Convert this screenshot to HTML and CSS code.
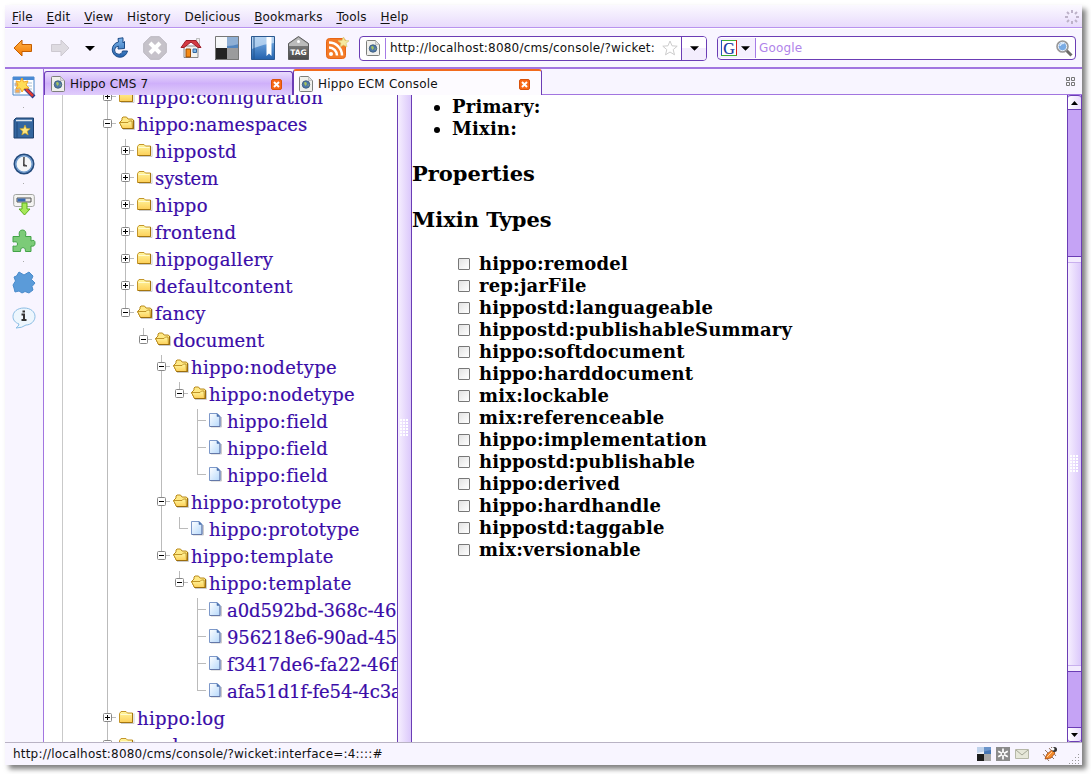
FILE: index.html
```html
<!DOCTYPE html>
<html lang="en">
<head>
<meta charset="utf-8">
<title>Hippo ECM Console</title>
<link rel="stylesheet" href="styles.css">
</head>
<body>
<svg class="defs" width="0" height="0">
  <defs>
    <linearGradient id="gold" x1="0" y1="0" x2="0" y2="1"><stop offset="0" stop-color="#fff7a0"/><stop offset="1" stop-color="#fdcf58"/></linearGradient>
    <linearGradient id="sheet" x1="0" y1="0" x2="1" y2="1"><stop offset="0" stop-color="#fff"/><stop offset="1" stop-color="#b5d8fb"/></linearGradient>
    <linearGradient id="orange" x1="0" y1="0" x2="0" y2="1"><stop offset="0" stop-color="#ffb347"/><stop offset="1" stop-color="#f57900"/></linearGradient>
    <linearGradient id="blue" x1="0" y1="0" x2="0" y2="1"><stop offset="0" stop-color="#7db4ea"/><stop offset="1" stop-color="#2361ad"/></linearGradient>
    <linearGradient id="grey" x1="0" y1="0" x2="0" y2="1"><stop offset="0" stop-color="#999"/><stop offset="1" stop-color="#484848"/></linearGradient>
    <symbol id="folder" viewBox="0 0 16 14"><path d="M2 13.500h13v-10" fill="none" stroke="#ccc"/><path d="M.5 3.500l1.500-2h5l1.500 1.500h5v9.500H.5z" fill="url(#gold)" stroke="#c3952a"/><path d="M1.500 4.500h11" stroke="#fffbd0"/><path d="M13.500 3v9.500H1" fill="none" stroke="#a5760f"/></symbol>
    <symbol id="open" viewBox="0 0 16 14"><path d="M4 13.500h11.500v-9" fill="none" stroke="#ccc"/><path d="M3.500 12.500L.5 6.500 3 4V2l1-1h3.500l1.500 2h4l1.500 1v8.500z" fill="#ffe985" stroke="#b98a1c"/><path d="M.5 6.500h8.500l1.500-1.500h2.500l.5 7.500h-10z" fill="url(#gold)" stroke="#b98a1c" stroke-width=".9"/><path d="M14.500 4v8.500H3.500" fill="none" stroke="#9b6d0d"/></symbol>
    <symbol id="doc" viewBox="0 0 13 15"><path d="M2 14h10.500V4" fill="none" stroke="#ccc"/><path d="M.5.5h7.500l3 3v10H.5z" fill="url(#sheet)" stroke="#7d98c9"/><path d="M8 .5v3h3z" fill="#466eb0" stroke="#5478b4" stroke-width=".6"/><path d="M11 4v9.500H1" fill="none" stroke="#6478a8"/></symbol>
    <symbol id="plus" viewBox="0 0 9 9"><rect x=".5" y=".5" width="8" height="8" rx="1" fill="#fff" stroke="#888"/><path d="M2 4.500h5M4.500 2v5" stroke="#000"/></symbol>
    <symbol id="minus" viewBox="0 0 9 9"><rect x=".5" y=".5" width="8" height="8" rx="1" fill="#fff" stroke="#888"/><path d="M2 4.500h5" stroke="#000"/></symbol>
    <symbol id="page" viewBox="0 0 14 16"><path d="M.5 1.500q0-1 1-1h8l4 4v10q0 1-1 1h-11q-1 0-1-1z" fill="#f0f0ec" stroke="#7d7f7b"/><path d="M9.500.5v4h4z" fill="#ddd" stroke="#aaa" stroke-width=".6"/><circle cx="7" cy="8.500" r="3.800" fill="#4f78a8" stroke="#31506f" stroke-width=".7"/><path d="M5 6.500l2-.5 1 2-1.500 2-1-1.500zM8.500 9.500l1-1.500v2z" fill="#a9c35a"/></symbol>
    <symbol id="close" viewBox="0 0 11 11"><rect x=".5" y=".5" width="10" height="10" rx="1.500" fill="#f86816" stroke="#d8520c"/><path d="M3 3l5 5M8 3l-5 5" stroke="#fff" stroke-width="2"/></symbol>
  </defs>
</svg>

<div class="window">
  <nav class="menu">
    <span><u>F</u>ile</span><span><u>E</u>dit</span><span><u>V</u>iew</span><span>Hi<u>s</u>tory</span><span>De<u>l</u>icious</span><span><u>B</u>ookmarks</span><span><u>T</u>ools</span><span><u>H</u>elp</span>
    <svg class="throbber" width="14" height="14" viewBox="0 0 14 14"><path d="M7 0v3M7 11v3M0 7h3M11 7h3M2 2l2 2M10 10l2 2M2 12l2-2M10 4l2-2" fill="none" stroke="#bdb2c9" stroke-width="2"/></svg>
  </nav>

  <header class="toolbar">
    <svg class="tool back" width="20" height="18" viewBox="0 0 20 18"><path d="M1 9l8-8v4.500h9.500v7H9V17z" fill="url(#orange)" stroke="#c45d00"/></svg>
    <svg class="tool fwd" width="20" height="18" viewBox="0 0 20 18"><path d="M19 9l-8-8v4.500H1.500v7H11V17z" fill="#dedbe1" stroke="#cdc9d1"/></svg>
    <svg class="tool drop" width="10" height="5" viewBox="0 0 10 5"><path d="M0 0h10L5 5z"/></svg>
    <svg class="tool reload" width="20" height="22" viewBox="0 0 20 22"><path d="M9.500 5A7.700 7.700 0 1 0 18.500 14h-5A4 4 0 1 1 9.500 9.200L9 12l6.500-.5V4.500L14 6V.8L9 1.500z" fill="url(#blue)" stroke="#1d4b87" stroke-linejoin="round"/></svg>
    <svg class="tool stop" width="24" height="24" viewBox="0 0 24 24"><path d="M7.500.7h9l6.800 6.800v9l-6.800 6.800h-9L.7 16.500v-9z" fill="#c6c2ca" stroke="#bbb7bf"/><path d="M7 7l10 10M17 7L7 17" stroke="#fff" stroke-width="4"/></svg>
    <svg class="tool home" width="22" height="22" viewBox="0 0 22 22"><path d="M4 9h14v11.500H4z" fill="#f3f2ef" stroke="#888"/><path d="M16.500 1.500h3v6h-3z" fill="#eee" stroke="#999" stroke-width=".6"/><path d="M1 10.500l5-7h10l5 7h-3l-7-5.500-7 5.500z" fill="#d43a43" stroke="#9c1d27"/><path d="M6 12h4.500v8H6z" fill="#f58a16" stroke="#9a4b05"/><path d="M13 12h3.500v3.500H13z" fill="#80b8e8" stroke="#3568a0"/></svg>
    <svg class="tool delicious" width="24" height="24" viewBox="0 0 24 24"><path d="M0 0h12v12H0z" fill="#f3f5f7"/><path d="M12 0h12v12H12z" fill="#5385bf"/><path d="M0 12h12v12H0z" fill="#232323"/><path d="M12 12h12v12H12z" fill="#9b9b9d"/><path d="M0 0h24v8Q12 12 0 8z" fill="#fff" opacity=".35"/><path d="M.5.5h23v23H.5z" fill="none" stroke="#777"/></svg>
    <svg class="tool book" width="24" height="24" viewBox="0 0 24 24"><path d="M.5.5h23v23H.5z" fill="url(#blue)" stroke="#2b588f"/><path d="M1 1h22v6Q12 8 1 13z" fill="#c8def4" opacity=".75"/><path d="M15.500 1h5v19l-2.500-2.500-2.500 2.500z" fill="#fff"/><path d="M3 1v22" stroke="#24568f" stroke-width="2" opacity=".5"/></svg>
    <svg class="tool tag" width="21" height="24" viewBox="0 0 21 24"><path d="M.5 7.500l10-7 10 7v16H.5z" fill="url(#grey)" stroke="#5b5b5b"/><path d="M1 10V8l9.500-6.500L20 8v2z" fill="#bbb"/><circle cx="10.500" cy="5.500" r="1.500" fill="#fff"/><text x="10.500" y="19" text-anchor="middle" class="tagtext">TAG</text></svg>
    <svg class="tool rss" width="23" height="22" viewBox="0 0 23 22"><rect x=".5" y="1.500" width="19" height="20" rx="3" fill="#f47a27" stroke="#e76515"/><circle cx="5" cy="17" r="2" fill="#fff"/><path d="M3 10.500a8 8 0 0 1 8 8M3 5.500a13 13 0 0 1 13 13" fill="none" stroke="#fff" stroke-width="2.500"/><path d="M17.500 0l1.500 3.500 4 .3-3 2.500 1 3.700-3.500-2-3.500 2 1-3.700-3-2.500 4-.3z" fill="#f6e9a0" stroke="#d9c872" stroke-width=".7"/></svg>
    <div class="url">
      <svg width="14" height="16"><use href="#page"/></svg>
      <span class="urltext">http://localhost:8080/cms/console/?wicket:</span>
      <svg class="star" width="16" height="16" viewBox="0 0 16 16"><path d="M8 1l2 4.800 5.200.4-4 3.400 1.300 5.200L8 12l-4.500 2.800 1.300-5.200-4-3.400L6 5.800z" fill="#fff" stroke="#ccc"/></svg>
      <span class="urldrop"><svg width="9" height="5" viewBox="0 0 10 5"><path d="M0 0h10L5 5z"/></svg></span>
    </div>
    <div class="search">
      <span class="engine"><svg width="16" height="16" viewBox="0 0 16 16"><path d="M0 0h16v16H0z" fill="#fff"/><path d="M0 .5h16" stroke="#3cac35"/><path d="M.5 0v16" stroke="#1d54bd"/><path d="M15.500 0v16" stroke="#d4201b"/><path d="M0 15.500h16" stroke="#3cac35"/><text x="8" y="13.500" text-anchor="middle" class="gtext">G</text></svg><svg width="9" height="5" viewBox="0 0 10 5"><path d="M0 0h10L5 5z"/></svg></span>
      <span class="searchtext">Google</span>
      <svg class="lens" width="17" height="17" viewBox="0 0 17 17"><path d="M10 10l5.500 5.500" stroke="#6b6b68" stroke-width="3"/><circle cx="6.500" cy="6.500" r="5.300" fill="#8dbcf0" stroke="#999" stroke-width="2"/><circle cx="6.500" cy="6.500" r="4.200" fill="#79abe4" stroke="#e9eef5"/><path d="M4 6a3 3 0 0 1 4-2.500" fill="none" stroke="#d7e8fb" stroke-width="1.500"/></svg>
    </div>
  </header>

  <div class="body">
    <aside class="side">
      <svg width="24" height="24" viewBox="0 0 24 24"><path d="M1 2h21v18H1z" fill="#fff" stroke="#4a86c9"/><path d="M1 2h21v3H1z" fill="#4a8ad4"/><path d="M3 8h5v3H3zM3 14h5v4H3zM15 8h5M15 11h5M16 14h4" fill="#f8ab54" stroke="#a8bdd2"/><path d="M11 11l11 11" stroke="#243d8f" stroke-width="4"/><path d="M14 14l7 7" stroke="#e03a31" stroke-width="2.500"/><path d="M10 3l1.500 4L16 6l-2 4 3 3-4.500.5L10 17l-2-4-4 .5L6 10 4 6l4 1z" fill="#ffdc55" stroke="#f5a623"/></svg>
      <i class="dot"></i>
      <svg width="22" height="23" viewBox="0 0 22 23"><path d="M1 3l2-2h17.500v20H1z" fill="#34669f" stroke="#1d3f6c"/><path d="M3 3.500h16" stroke="#dfe6ee" stroke-width="1.500"/><path d="M4 5v16" stroke="#21497c"/><path d="M12 8l1.400 3.500 3.800.3-3 2.400 1 3.800-3.200-2-3.200 2 1-3.800-3-2.400 3.800-.3z" fill="#ffe680" stroke="#d5a610" stroke-width=".6"/></svg>
      <svg width="22" height="22" viewBox="0 0 22 22"><circle cx="11" cy="11" r="9.500" fill="#f4f6f7" stroke="#244b7d" stroke-width="2"/><circle cx="11" cy="11" r="8.200" fill="none" stroke="#6d99cc" stroke-width="1.500"/><path d="M11 4v7.500l3 1.500H10.500z" fill="#444" stroke="#444"/></svg>
      <i class="dot"></i>
      <svg width="22" height="23" viewBox="0 0 22 23"><rect x=".7" y="1.500" width="20.600" height="12" rx="2" fill="#f4f4f2" stroke="#a3a5a2"/><path d="M4 5h14v4H4z" fill="#e5e5e5" stroke="#555"/><path d="M4.500 5.500h8v3h-8z" fill="#3869b1"/><path d="M9 10v6H6l5.500 6 5.500-6h-3v-6z" fill="#a7e85a" stroke="#5cb01c"/></svg>
      <svg width="24" height="24" viewBox="0 0 24 24"><path d="M1 7.500h6.500Q6 1 10.500 1t3 6.500H19V12q4-2 4 2t-4 3v5.500h-5.500q.5-4-2.500-4t-2.500 4H1V17q4.500 1 4.500-2T1 13z" fill="#7ccb78" stroke="#43a347"/></svg>
      <i class="dot"></i>
      <svg width="24" height="23" viewBox="0 0 24 23"><path d="M7 1l5 3 5-3 4 4-1.500 3.500L23 12l-3 3.500 1 3.500-4 3-4-1.500L10 22 7 20l-4 1-1-4-1-3 2.500-4L2 6l2.500-1z" fill="#5b9bd9" stroke="#4a8bcb"/></svg>
      <svg width="24" height="22" viewBox="0 0 24 22"><path d="M12 1c7 0 11 4 11 8.500S19 18 14 18q-4 3-10 3 3-2 3-4C3 15.500 1 13 1 9.500 1 5 5 1 12 1z" fill="#edf6fd" stroke="#8abde4"/><path d="M9.500 7.500h2.500v5.500M9.500 13h5M10.500 4.500h2.500" stroke="#333" stroke-width="2" fill="none"/></svg>
    </aside>

    <main class="main">
      <div class="tabs">
        <div class="tab"><svg width="14" height="16"><use href="#page"/></svg><span>Hippo CMS 7</span><svg class="x" width="11" height="11"><use href="#close"/></svg></div>
        <div class="tab active"><svg width="14" height="16"><use href="#page"/></svg><span>Hippo ECM Console</span><svg class="x" width="11" height="11"><use href="#close"/></svg></div>
        <svg class="grid" width="10" height="10" viewBox="0 0 10 10"><path d="M.5.5h3v3h-3zM5.500.5h3v3h-3zM.5 5.500h3v3h-3zM5.500 5.500h3v3h-3z" fill="none" stroke="#777"/></svg>
      </div>

      <div class="panes">
        <div class="tree">
          <div class="row"><i class="t"><svg><use href="#plus"/></svg></i><svg class="ic"><use href="#folder"/></svg><a>hippo:configuration</a></div>
          <div class="row snug"><i class="t"><svg><use href="#minus"/></svg></i><svg class="ic"><use href="#open"/></svg><a>hippo:namespaces</a></div>
          <div class="row"><i class="g"></i><i class="t"><svg><use href="#plus"/></svg></i><svg class="ic"><use href="#folder"/></svg><a>hippostd</a></div>
          <div class="row tight"><i class="g"></i><i class="t"><svg><use href="#plus"/></svg></i><svg class="ic"><use href="#folder"/></svg><a>system</a></div>
          <div class="row"><i class="g"></i><i class="t"><svg><use href="#plus"/></svg></i><svg class="ic"><use href="#folder"/></svg><a>hippo</a></div>
          <div class="row"><i class="g"></i><i class="t"><svg><use href="#plus"/></svg></i><svg class="ic"><use href="#folder"/></svg><a>frontend</a></div>
          <div class="row"><i class="g"></i><i class="t"><svg><use href="#plus"/></svg></i><svg class="ic"><use href="#folder"/></svg><a>hippogallery</a></div>
          <div class="row"><i class="g"></i><i class="t"><svg><use href="#plus"/></svg></i><svg class="ic"><use href="#folder"/></svg><a>defaultcontent</a></div>
          <div class="row"><i class="g"></i><i class="t last"><svg><use href="#minus"/></svg></i><svg class="ic"><use href="#open"/></svg><a>fancy</a></div>
          <div class="row snug"><i class="g"></i><i class="b"></i><i class="t last"><svg><use href="#minus"/></svg></i><svg class="ic"><use href="#open"/></svg><a>document</a></div>
          <div class="row"><i class="g"></i><i class="b"></i><i class="b"></i><i class="t"><svg><use href="#minus"/></svg></i><svg class="ic"><use href="#open"/></svg><a>hippo:nodetype</a></div>
          <div class="row"><i class="g"></i><i class="b"></i><i class="b"></i><i class="g"></i><i class="t last"><svg><use href="#minus"/></svg></i><svg class="ic"><use href="#open"/></svg><a>hippo:nodetype</a></div>
          <div class="row"><i class="g"></i><i class="b"></i><i class="b"></i><i class="g"></i><i class="b"></i><i class="t"></i><svg class="ic leaf"><use href="#doc"/></svg><a>hippo:field</a></div>
          <div class="row"><i class="g"></i><i class="b"></i><i class="b"></i><i class="g"></i><i class="b"></i><i class="t"></i><svg class="ic leaf"><use href="#doc"/></svg><a>hippo:field</a></div>
          <div class="row"><i class="g"></i><i class="b"></i><i class="b"></i><i class="g"></i><i class="b"></i><i class="t last"></i><svg class="ic leaf"><use href="#doc"/></svg><a>hippo:field</a></div>
          <div class="row"><i class="g"></i><i class="b"></i><i class="b"></i><i class="t"><svg><use href="#minus"/></svg></i><svg class="ic"><use href="#open"/></svg><a>hippo:prototype</a></div>
          <div class="row"><i class="g"></i><i class="b"></i><i class="b"></i><i class="g"></i><i class="t last"></i><svg class="ic leaf"><use href="#doc"/></svg><a>hippo:prototype</a></div>
          <div class="row"><i class="g"></i><i class="b"></i><i class="b"></i><i class="t last"><svg><use href="#minus"/></svg></i><svg class="ic"><use href="#open"/></svg><a>hippo:template</a></div>
          <div class="row"><i class="g"></i><i class="b"></i><i class="b"></i><i class="b"></i><i class="t last"><svg><use href="#minus"/></svg></i><svg class="ic"><use href="#open"/></svg><a>hippo:template</a></div>
          <div class="row tight"><i class="g"></i><i class="b"></i><i class="b"></i><i class="b"></i><i class="b"></i><i class="t"></i><svg class="ic leaf"><use href="#doc"/></svg><a>a0d592bd-368c-46</a></div>
          <div class="row tight"><i class="g"></i><i class="b"></i><i class="b"></i><i class="b"></i><i class="b"></i><i class="t"></i><svg class="ic leaf"><use href="#doc"/></svg><a>956218e6-90ad-45</a></div>
          <div class="row snug"><i class="g"></i><i class="b"></i><i class="b"></i><i class="b"></i><i class="b"></i><i class="t"></i><svg class="ic leaf"><use href="#doc"/></svg><a>f3417de6-fa22-46f5</a></div>
          <div class="row tight"><i class="g"></i><i class="b"></i><i class="b"></i><i class="b"></i><i class="b"></i><i class="t last"></i><svg class="ic leaf"><use href="#doc"/></svg><a>afa51d1f-fe54-4c3a</a></div>
          <div class="row"><i class="t"><svg><use href="#plus"/></svg></i><svg class="ic"><use href="#folder"/></svg><a>hippo:log</a></div>
          <div class="row final"><i class="t"><svg><use href="#plus"/></svg></i><svg class="ic"><use href="#folder"/></svg><a>workspaces</a></div>
        </div>

        <div class="splitter"><i class="grip"></i></div>

        <section class="detail">
          <ul class="types"><li>Primary:</li><li>Mixin:</li></ul>
          <h3>Properties</h3>
          <h3>Mixin Types</h3>
          <ul class="mixins">
            <li><i class="box"></i>hippo:remodel</li>
            <li><i class="box"></i>rep:jarFile</li>
            <li><i class="box"></i>hippostd:languageable</li>
            <li><i class="box"></i>hippostd:publishableSummary</li>
            <li><i class="box"></i>hippo:softdocument</li>
            <li><i class="box"></i>hippo:harddocument</li>
            <li><i class="box"></i>mix:lockable</li>
            <li><i class="box"></i>mix:referenceable</li>
            <li><i class="box"></i>hippo:implementation</li>
            <li><i class="box"></i>hippostd:publishable</li>
            <li><i class="box"></i>hippo:derived</li>
            <li><i class="box"></i>hippo:hardhandle</li>
            <li><i class="box"></i>hippostd:taggable</li>
            <li><i class="box"></i>mix:versionable</li>
          </ul>
        </section>

        <div class="scroll">
          <div class="btn up"><svg width="7" height="4" viewBox="0 0 7 4"><path d="M0 4h7L3.500 0z"/></svg></div>
          <div class="trough"></div>
          <div class="thumb"><i class="grip"></i></div>
          <div class="trough below"></div>
          <div class="btn down"><svg width="7" height="4" viewBox="0 0 7 4"><path d="M0 0h7L3.500 4z"/></svg></div>
        </div>
      </div>
    </main>
  </div>

  <footer class="status">
    <span class="link">http://localhost:8080/cms/console/?wicket:interface=:4::::#</span>
    <svg width="14" height="14" viewBox="0 0 14 14"><path d="M0 0h7v7H0z" fill="#eef2f7"/><path d="M7 0h7v7H7z" fill="#4676b4"/><path d="M0 7h7v7H0z" fill="#1c1c1c"/><path d="M7 7h7v7H7z" fill="#a8a8a8"/><path d="M0 0h14v3L0 6z" fill="#8fb2df" opacity=".5"/></svg>
    <svg width="14" height="14" viewBox="0 0 14 14"><path d="M0 0h14v14H0z" fill="#8b8b8b"/><path d="M7 1.500v11M2.200 4.200l9.600 5.600M11.800 4.200L2.200 9.800" stroke="#fff" stroke-width="1.700"/><circle cx="7" cy="7" r="1.200" fill="#8b8b8b"/></svg>
    <svg width="14" height="10" viewBox="0 0 14 10"><path d="M.5.5h13v9H.5z" fill="#e6e7d9" stroke="#b6b8a8"/><path d="M1 1l6 5 6-5" fill="none" stroke="#a5a797"/></svg>
    <svg class="bug" width="17" height="16" viewBox="0 0 17 16"><path d="M3 4l9 9M1 8l6 7M7 2l7 8M9 1l3 3" stroke="#76553c" stroke-width=".8"/><path d="M3 13l2-5 5-4 3 3-4 5z" fill="#f58b2b" stroke="#a3480c" stroke-width=".8"/><path d="M5 11l5-5" stroke="#ffd0a0"/><circle cx="12.500" cy="3.500" r="2.500" fill="#333"/><circle cx="11" cy="3" r="1.500" fill="#fff"/></svg>
    <svg class="resize" width="12" height="11" viewBox="0 0 12 11"><path d="M9 1.500h1M6 4.500h1M9 4.500h1M3 7.500h1M6 7.500h1M9 7.500h1M0 10.500h1M3 10.500h1M6 10.500h1M9 10.500h1" stroke="#999"/></svg>
  </footer>
</div>
</body>
</html>
```

FILE: styles.css
```css
* { box-sizing: border-box; }
body { margin: 0; padding: 5px; height: 774px; overflow: hidden; background: #fff; font: 12px/15px "DejaVu Sans", sans-serif; color: #111; }
svg { display: block; flex: none; }
.defs { position: absolute; }
i { display: block; font-style: normal; flex: none; }
.window { width: 1077px; height: 760px; display: flex; flex-direction: column; background: #f7f3ff; box-shadow: 4px 4px 5px rgba(0,0,0,.5); }

.menu { height: 23px; flex: none; display: flex; align-items: center; gap: 13.800px; padding: 2px 3px 0 7px; background: linear-gradient(#fbf9ff, #e8dbfc); border-bottom: 1px solid #b893ee; letter-spacing: .15px; }
.menu u { text-underline-offset: 2px; }
.throbber { margin-left: auto; }

.toolbar { height: 41px; flex: none; display: flex; align-items: center; padding: 0 5px 0 8px; background: #f8f5ff; border-top: 1px solid #fff; border-bottom: 2px solid #a275e0; }
.fwd { margin-left: 17px; }
.drop { margin-left: 15px; }
.reload { margin-left: 14px; }
.stop { margin-left: 14px; }
.home { margin-left: 13px; }
.delicious { margin-left: 13px; }
.book { margin-left: 12px; }
.tag { margin-left: 13px; }
.rss { margin-left: 17px; }
.tagtext { font: bold 7.500px "DejaVu Sans", sans-serif; fill: #fff; }
.gtext { font: 16px "Liberation Serif", serif; fill: #1333a0; stroke: #1333a0; stroke-width: .2; }
.url, .search { flex: none; height: 25px; background: #fff; border: 1px solid #6b3db5; border-radius: 4px; display: flex; align-items: center; overflow: hidden; }
.url { width: 348px; margin-left: 10px; padding-left: 6px; }
.urltext { flex: 1; margin-left: 5px; padding-left: 4px; height: 21px; line-height: 21px; border-left: 1px solid #a57be6; letter-spacing: .2px; white-space: nowrap; }
.urldrop { width: 25px; height: 23px; margin-left: 3px; border-left: 1px solid #6b3db5; display: flex; align-items: center; justify-content: center; background: linear-gradient(#fff 50%, #f3edfd 50%); }
.search { width: 359px; margin-left: 10px; padding-right: 2px; height: 24px; }
.engine { display: flex; align-items: center; gap: 4px; height: 20px; padding: 0 5px 0 3px; border-right: 1px solid #a57be6; background: #f5f0fe; }
.searchtext { flex: 1; padding-left: 3px; color: #b084ea; letter-spacing: .15px; }

.body { flex: 1; display: flex; min-height: 0; }
.side { width: 39px; border-right: 1px solid #a275e0; background: #f8f5ff; display: flex; flex-direction: column; align-items: center; padding: 6px 1px 0 0; }
.side svg + svg { margin-top: 13px; }
.dot { width: 1px; height: 1px; background: #aaa; margin: 8px 0 9px; }
.main { flex: 1; display: flex; flex-direction: column; min-width: 0; }
.tabs { height: 26px; flex: none; display: flex; align-items: stretch; background: #f8f5ff; border-bottom: 1px solid #a275e0; }
.tab { width: 249px; height: 24px; margin-top: 2px; padding: 1px 10px 0 6px; display: flex; align-items: center; gap: 5px; border: 1px solid #6b3db5; border-bottom: 0; border-radius: 3px 3px 0 0; background: linear-gradient(#eadcfd, #cfb0fa 50%, #e0cdfb); letter-spacing: .15px; }
.tab.active { height: 26px; margin-top: 0; background: #fdfbff; border-top: 2px solid #f26b1d; padding: 2px 11px 0 5px; letter-spacing: .2px; }
.tab .x { margin-left: auto; }
.grid { margin: 8px 6px 0 auto; }

.panes { flex: 1; display: flex; min-height: 0; background: #fff; }
.tree { width: 353px; overflow: hidden; background: linear-gradient(#c9c9c9, #c9c9c9) 18px 0 / 1px 100% no-repeat; }
.tree .row:first-child { margin-top: -10px; }
.row { height: 27px; display: flex; align-items: flex-start; padding-left: 55px; white-space: nowrap; font: 18px/25px "DejaVu Serif", serif; letter-spacing: .32px; color: #3a0ca8; -webkit-text-stroke: .2px #3a0ca8; }
.row.snug { letter-spacing: .1px; }
.row.tight { letter-spacing: -.08px; }
.row.final { height: 17px; overflow: hidden; }
.g, .b, .t { width: 18px; height: 27px; }
.g { background: linear-gradient(#bbb, #bbb) 8px 0 / 1px 100% no-repeat; }
.t { padding: 7px 0 0 4px; background: linear-gradient(#bbb, #bbb) 8px 0 / 1px 100% no-repeat, linear-gradient(#bbb, #bbb) 8px 11px / 9px 1px no-repeat; }
.t.last { background: linear-gradient(#bbb, #bbb) 8px 0 / 1px 12px no-repeat, linear-gradient(#bbb, #bbb) 8px 11px / 9px 1px no-repeat; }
.t svg { width: 9px; height: 9px; }
.ic { width: 16px; height: 14px; margin: 4px 2px 0; }
.ic.leaf { width: 13px; height: 15px; margin: 4px 5px 0 2px; }
.splitter { width: 15px; border: solid #6b3db5; border-width: 0 1px; display: flex; align-items: center; justify-content: center; background: linear-gradient(90deg, #f6effe, #dbc8fb); }
.grip { width: 9px; height: 18px; margin-top: 18px; background: conic-gradient(from 0deg at 2px 2px, transparent 270deg, #c4b0df 0) 0 0 / 3px 3px, #fff; background: conic-gradient(from 0deg at 2px 2px, transparent 270deg, #fff 0) 0 0 / 3px 3px; }

.detail { flex: 1; font: bold 18px/22px "DejaVu Serif", serif; letter-spacing: .18px; color: #000; white-space: nowrap; }
.detail ul { margin: 0; padding: 0; }
.detail .types { padding: 1px 0 0 40px; }
.detail h3 { margin: 0; font-size: 21px; line-height: 24px; letter-spacing: 0; }
.detail .types + h3, .detail h3 + h3 { margin-top: 22px; }
.detail .mixins { margin-top: 21px; list-style: none; padding-left: 46px; }
.mixins li { display: flex; align-items: center; gap: 9px; }
.box { width: 12px; height: 12px; border: 1px solid #777; border-radius: 1px; background: linear-gradient(135deg, #e2e2e2, #fff); }

.scroll { width: 15px; display: flex; flex-direction: column; border: solid #6b3db5; border-width: 0 1px; background: #c5a3f5; }
.btn { height: 15px; flex: none; display: flex; align-items: center; justify-content: center; background: linear-gradient(90deg, #fff, #eadcfd); border-top: 1px solid #6b3db5; border-bottom: 1px solid #6b3db5; }
.up { border-radius: 3px 3px 0 0; }
.down { border-radius: 0 0 3px 3px; }
.trough { height: 146px; flex: none; }
.trough.below { flex: 1; height: auto; }
.thumb { height: 416px; flex: none; display: flex; align-items: center; justify-content: center; border: solid #6b3db5; border-width: 1px 0; background: linear-gradient(#f3ebfe, #f3ebfe) 0 0 / 100% 5px no-repeat, linear-gradient(#c9b0ee, #c9b0ee) 0 5px / 100% 1px no-repeat, linear-gradient(#f3ebfe, #f3ebfe) 0 100% / 100% 5px no-repeat, linear-gradient(#c9b0ee, #c9b0ee) 0 408px / 100% 1px no-repeat, linear-gradient(90deg, #f6effe, #dbc8fb); }
.thumb .grip { margin: 0; }

.status { height: 23px; flex: none; display: flex; align-items: center; gap: 5px; padding: 0 1px 0 8px; border-top: 1px solid #b9b3c4; background: #f8f5ff; }
.link { flex: 1; letter-spacing: .2px; }
.bug { margin-left: 8px; }
.resize { margin: 9px 0 0 5px; }
```
